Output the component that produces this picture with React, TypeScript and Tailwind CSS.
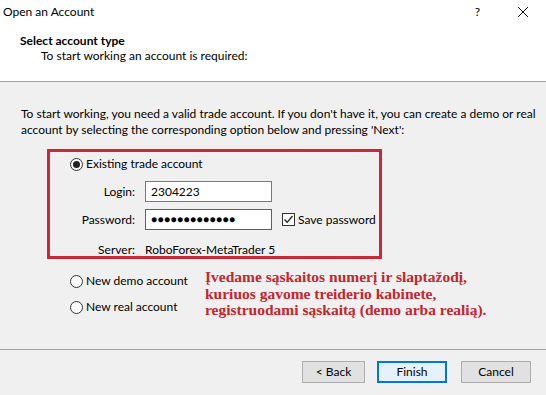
export default function App() {
  const font = { fontFamily: 'Lato, "Segoe UI", "Noto Sans", sans-serif' };
  return (
    <div className="w-[546px] h-[395px] bg-[#f0f0f0] text-[12px] text-black overflow-hidden flex flex-col whitespace-nowrap" style={font}>
      {/* header */}
      <div className="bg-white h-[82px] border-b border-[#a0a0a0] flex flex-col">
        <div className="flex items-center h-[24px] pl-[3px]">
          <span className="text-[12px]">Open an Account</span>
          <span className="ml-auto mr-[37px] text-[12px]">?</span>
          <svg width="12" height="12" viewBox="0 0 12 12" className="mr-[17px]">
            <path d="M1 1 L11 11 M11 1 L1 11" stroke="#111" strokeWidth="1" />
          </svg>
        </div>
        <div className="pl-[20px] pt-[9px] font-bold leading-[15px]">Select account type</div>
        <div className="pl-[41px] leading-[15px]">To start working an account is required:</div>
      </div>

      {/* body */}
      <div className="flex-1 flex flex-col">
        <p className="pl-[21px] pt-[24px] leading-[16px] text-[12px]">
          To start working, you need a valid trade account. If you don't have it, you can create a demo or real
          <br />
          account by selecting the corresponding option below and pressing 'Next':
        </p>

        <div className="ml-[47px] mt-[11px] w-[335px] h-[110px] border-[3px] border-[#c8283a] flex flex-col pl-[20px] pt-[4px]">
          <label className="flex items-center gap-[3px] h-[16px]">
            <span className="w-[13px] h-[13px] rounded-full border border-[#333] flex items-center justify-center bg-white">
              <span className="w-[7px] h-[7px] rounded-full bg-[#222]" />
            </span>
            Existing trade account
          </label>
          <div className="flex items-center mt-[9px]">
            <span className="w-[65px] text-right">Login:</span>
            <div className="ml-[10px] w-[127px] h-[21px] border border-[#7a7a7a] bg-white flex items-center pl-[5px]">2304223</div>
          </div>
          <div className="flex items-center mt-[7px]">
            <span className="w-[65px] text-right">Password:</span>
            <div className="ml-[10px] w-[127px] h-[21px] border border-[#0078d7] bg-white flex items-center pl-[5px] text-[10px] tracking-[0.5px]">
              ●●●●●●●●●●●●●
            </div>
            <label className="flex items-center ml-[10px] gap-[3px]">
              <span className="w-[13px] h-[13px] border border-[#333] bg-white flex items-center justify-center">
                <svg width="11" height="11" viewBox="0 0 11 11">
                  <path d="M1.5 5.5 L4.2 8.3 L9.5 2" fill="none" stroke="#222" strokeWidth="1.3" />
                </svg>
              </span>
              Save password
            </label>
          </div>
          <div className="flex items-center mt-[11px]">
            <span className="w-[65px] text-right">Server:</span>
            <span className="ml-[10px]">RoboForex-MetaTrader 5</span>
          </div>
        </div>

        <div className="flex mt-[14px]">
          <div className="pl-[70px] w-[205px] flex flex-col gap-[10px]">
            <label className="flex items-center gap-[3px] h-[16px]">
              <span className="w-[13px] h-[13px] rounded-full border border-[#333] bg-white" />
              New demo account
            </label>
            <label className="flex items-center gap-[3px] h-[16px]">
              <span className="w-[13px] h-[13px] rounded-full border border-[#333] bg-white" />
              New real account
            </label>
          </div>
          <div
            className="-mt-[4px] text-[#c4262e] font-bold text-[15.5px] leading-[16.5px]"
            style={{ fontFamily: '"Liberation Serif", "DejaVu Serif", serif' }}
          >
            Įvedame sąskaitos numerį ir slaptažodį,
            <br />
            kuriuos gavome treiderio kabinete,
            <br />
            registruodami sąskaitą (demo arba realią).
          </div>
        </div>

        <div className="mt-auto border-t border-[#a0a0a0] h-[46px] flex items-start pt-[11px]">
          <div className="ml-[302px] flex">
            <button className="w-[63px] h-[22px] border border-[#adadad] bg-[#e1e1e1]">&lt; Back</button>
            <button className="ml-[12px] w-[70px] h-[22px] border-2 border-[#0078d7] bg-[#e5f1fb]">Finish</button>
            <button className="ml-[14px] w-[70px] h-[22px] border border-[#adadad] bg-[#e1e1e1]">Cancel</button>
          </div>
        </div>
      </div>
    </div>
  );
}
